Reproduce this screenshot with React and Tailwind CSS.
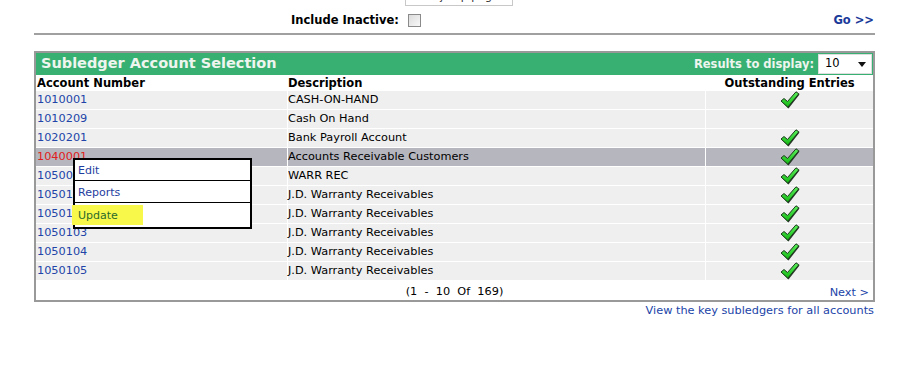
import React from 'react';

const rows = [
  { acct: '1010001', desc: 'CASH-ON-HAND', check: true },
  { acct: '1010209', desc: 'Cash On Hand', check: false },
  { acct: '1020201', desc: 'Bank Payroll Account', check: true },
  { acct: '1040001', desc: 'Accounts Receivable Customers', check: true, active: true },
  { acct: '1050000', desc: 'WARR REC', check: true },
  { acct: '1050101', desc: 'J.D. Warranty Receivables', check: true },
  { acct: '1050102', desc: 'J.D. Warranty Receivables', check: true },
  { acct: '1050103', desc: 'J.D. Warranty Receivables', check: true },
  { acct: '1050104', desc: 'J.D. Warranty Receivables', check: true },
  { acct: '1050105', desc: 'J.D. Warranty Receivables', check: true },
];

function Check() {
  return (
    <svg width="20" height="18" viewBox="0 0 20 18">
      <defs>
        <linearGradient id="ck" x1="0" y1="0" x2="0" y2="1">
          <stop offset="0" stopColor="#5cf05c" />
          <stop offset="1" stopColor="#12b812" />
        </linearGradient>
      </defs>
      <polygon points="2,11 5,8.5 8,11.5 16.5,1.5 19.5,3.5 8.5,17.5" fill="#2a3a2a" />
      <polygon points="1,10 4,7.5 7.5,10.5 16,0.8 18.8,2.8 7.8,16.2" fill="url(#ck)" stroke="#1d3a1d" strokeWidth="1" strokeLinejoin="round" />
    </svg>
  );
}

export default function App() {
  return (
    <div className="w-[902px] h-[368px] bg-white font-['DejaVu_Sans',Verdana,sans-serif] text-[11.3px] text-black overflow-hidden">
      <div className="ml-[34px] w-[841px]">
        {/* cut-off page box at the very top */}
        <div className="ml-[371px] w-[108px] h-[6px] border border-t-0 border-[#c8c8c8] overflow-hidden">
          <div className="-mt-[11px] pl-[34px] text-[11px] text-[#333]">jump page</div>
        </div>

        <div className="flex items-center h-[27px] pt-[2px]">
          <span className="ml-[257px] font-bold text-[11.5px]">Include Inactive:</span>
          <span className="ml-[9px] w-[13px] h-[13px] border border-[#8a8a8a] bg-gradient-to-br from-[#dcdcdc] to-[#f8f8f8]" />
          <a className="ml-auto mr-[1px] font-bold text-[#1a3a9a] text-[11.5px]">Go &gt;&gt;</a>
        </div>
        <div className="border-t-2 border-[#a0a0a0]" />

        <div className="relative mt-[16px] border-2 border-[#999]">
          <div className="flex items-center h-[22px] bg-[#38b072] pl-[5px] pr-[1px]">
            <span className="font-bold text-[14.5px] text-[#eef5ee]">Subledger Account Selection</span>
            <span className="ml-auto font-bold text-[11.5px] text-[#eef5ee] pt-[1px]">Results to display:</span>
            <span className="ml-[4px] flex items-center w-[54px] h-[20px] bg-white border border-[#ddd] pl-[6px] pr-[5px] text-[11.5px]">
              10
              <svg className="ml-auto" width="8" height="5" viewBox="0 0 8 5"><polygon points="0,0 8,0 4,5" fill="#111" /></svg>
            </span>
          </div>

          <div className="grid grid-cols-[251px_417px_1fr] gap-x-px h-[16px] pt-[2px] items-center font-bold text-[11.5px] leading-none">
            <span className="pl-[1px]">Account Number</span>
            <span>Description</span>
            <span className="text-center">Outstanding Entries</span>
          </div>

          <div className="grid gap-y-px bg-white">
            {rows.map((r) => (
              <div key={r.acct} className="grid grid-cols-[251px_417px_1fr] gap-x-px h-[18px] items-center">
                <div className={`h-full flex items-center pl-[1px] pt-[1px] ${r.active ? 'bg-[#b6b6be] text-[#e02020]' : 'bg-[#efefef] text-[#2144a8]'}`}>{r.acct}</div>
                <div className={`h-full flex items-center pt-[1px] ${r.active ? 'bg-[#b6b6be]' : 'bg-[#efefef]'}`}>{r.desc}</div>
                <div className={`h-full flex items-center justify-center ${r.active ? 'bg-[#b6b6be]' : 'bg-[#efefef]'}`}>{r.check && <Check />}</div>
              </div>
            ))}
          </div>

          <div className="relative flex items-center justify-center h-[19px] mt-px pt-[4px]">
            <span>(1&nbsp; -&nbsp; 10&nbsp; Of&nbsp; 169)</span>
            <a className="absolute right-[4px] top-[4px] text-[#2144a8]">Next &gt;</a>
          </div>

          {/* context menu */}
          <div className="absolute left-[37px] top-[105px] w-[179px] bg-white border-2 border-black text-[11px]">
            <div className="h-[21px] flex items-center pl-[3px] pt-[2px] border-b border-black text-[#1f3ea0]">Edit</div>
            <div className="h-[22px] flex items-center pl-[3px] pt-[3px] border-b border-black text-[#1f3ea0]">Reports</div>
            <div className="h-[24px] flex items-center">
              <span className="-ml-[3px] h-[20px] w-[71px] bg-[#f8f84a] flex items-center pl-[6px] pt-[2px] text-[#2a6a2a]">Update</span>
            </div>
          </div>
        </div>

        <div className="flex justify-end mt-[1px] mr-[1px]">
          <a className="text-[#2144a8]">View the key subledgers for all accounts</a>
        </div>
      </div>
    </div>
  );
}
